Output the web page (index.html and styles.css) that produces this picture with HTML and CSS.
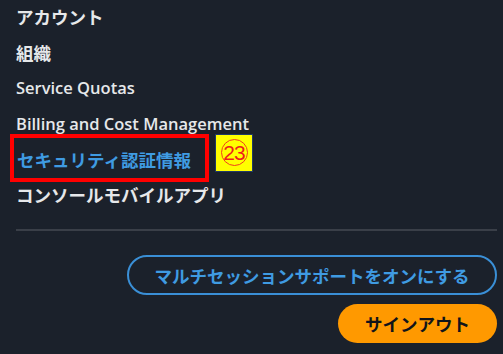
FILE: index.html
```html
<!DOCTYPE html>
<html lang="ja">
<head>
<meta charset="utf-8">
<link rel="stylesheet" href="styles.css">
</head>
<body>
<div class="panel">
  <ul class="menu">
    <li class="item">アカウント</li>
    <li class="item">組織</li>
    <li class="item en">Service Quotas</li>
    <li class="item en">Billing and Cost Management</li>
    <li class="item active">
      <span class="label">セキュリティ認証情報</span>
      <span class="highlight"></span>
      <span class="badge"><span class="num">23</span></span>
    </li>
    <li class="item">コンソールモバイルアプリ</li>
  </ul>
  <hr class="divider">
  <div class="actions">
    <button class="btn btn-outline">マルチセッションサポートをオンにする</button>
    <button class="btn btn-primary">サインアウト</button>
  </div>
</div>
</body>
</html>
```

FILE: styles.css
```css
html, body {
  margin: 0;
  padding: 0;
  background: #1b212b;
  overflow: hidden;
}
body {
  width: 503px;
  height: 354px;
  font-family: "Open Sans", "Noto Sans CJK JP", sans-serif;
  color: #e6e8ea;
}
.panel {
  padding: 0 6px 0 16px;
  margin-top: -1px;
}
.menu {
  list-style: none;
  margin: 0;
  padding: 0;
}
.item {
  position: relative;
  font-size: 17.5px;
  font-weight: 700;
  line-height: 22px;
  padding: 6.85px 0;
  white-space: nowrap;
}
.item.en {
  font-size: 16.5px;
  font-weight: 600;
}
.active .label {
  color: #3f9be2;
  margin-left: 1px;
}
.highlight {
  position: absolute;
  left: -6px;
  top: -8px;
  width: 191px;
  height: 40px;
  border: 4px solid #ff0000;
}
.badge {
  position: absolute;
  left: 199px;
  top: -8px;
  width: 36px;
  height: 36px;
  background: #ffff00;
  border: 1px solid #203a66;
  display: flex;
  align-items: center;
  justify-content: center;
}
.num {
  width: 25px;
  height: 25px;
  border: 1.5px solid #f0401e;
  border-radius: 50%;
  color: #ee1c1c;
  font-family: "Liberation Sans", sans-serif;
  font-weight: 400;
  font-size: 21px;
  line-height: 25px;
  text-align: center;
  letter-spacing: -1px;
}
.divider {
  border: 0;
  border-top: 2px solid #3a3f48;
  margin: 16px 0 0 0;
  height: 0;
}
.actions {
  display: flex;
  flex-direction: column;
  align-items: flex-end;
  gap: 9px;
  margin-top: 24px;
}
.btn {
  font-family: "Noto Sans CJK JP", sans-serif;
  font-weight: 700;
  font-size: 17.5px;
  border-radius: 20px;
  cursor: pointer;
  padding: 0;
}
.btn-outline {
  width: 370px;
  height: 40px;
  background: transparent;
  border: 2px solid #3a8fd6;
  color: #3f9be2;
}
.btn-primary {
  width: 159px;
  height: 39px;
  background: #ff9900;
  border: 0;
  color: #10141a;
}
```
